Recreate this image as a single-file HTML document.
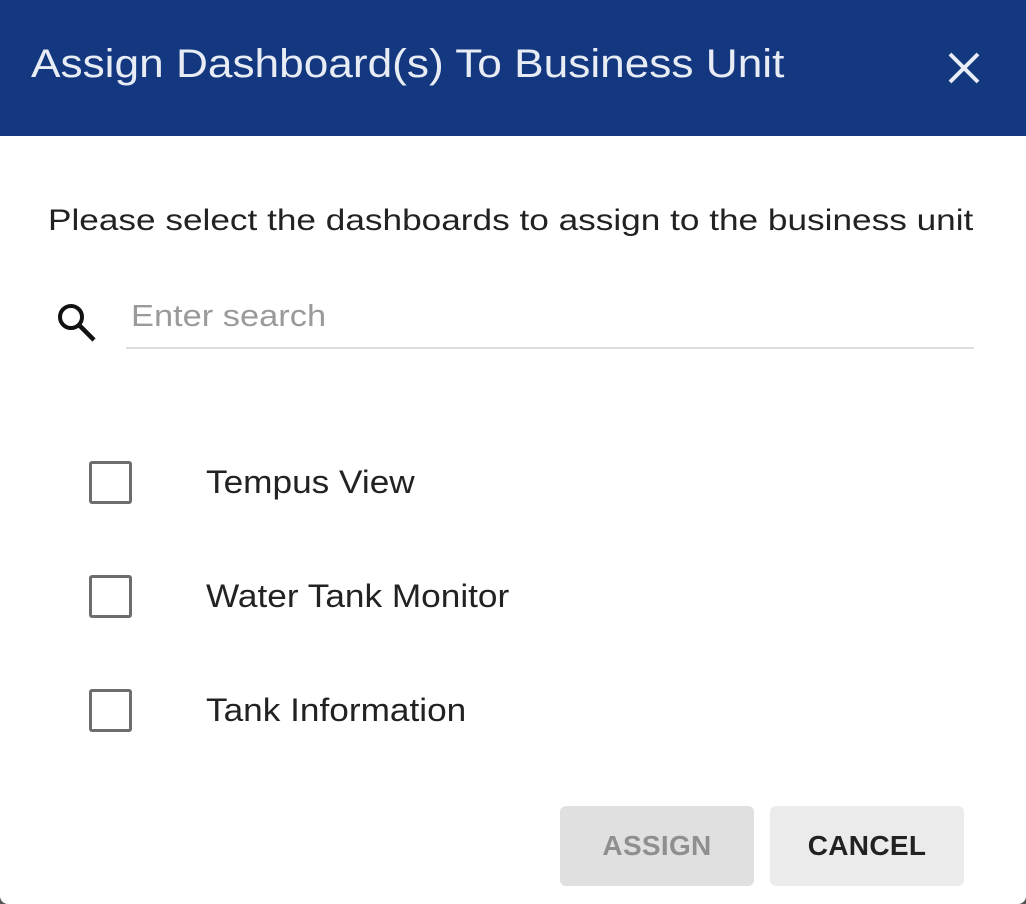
<!DOCTYPE html>
<html><head><style>
html,body{margin:0;padding:0;width:1026px;height:904px;overflow:hidden;background:#555;}
.d{position:absolute;left:0;top:0;width:1026px;height:904px;background:#fff;border-radius:0 0 8px 8px;font-family:"Liberation Sans",sans-serif;}
.h{position:absolute;left:0;top:0;width:1026px;height:136px;background:#14387f;}
.t{position:absolute;left:31px;top:42px;font-size:40px;color:#e8ecf5;white-space:nowrap;transform:scaleX(1.105);transform-origin:left;}
.p{position:absolute;left:48px;top:204px;font-size:30px;color:#222;white-space:nowrap;transform:scaleX(1.173);transform-origin:left;}
.ph{position:absolute;left:131px;top:298px;font-size:31px;color:#9a9a9a;transform:scaleX(1.11);transform-origin:left;}
.u{position:absolute;left:126px;top:347px;width:848px;height:2px;background:#ddd;}
.cb{position:absolute;left:89px;width:37px;height:37px;border:3px solid #6d6d6d;border-radius:3px;}
.l{position:absolute;left:206px;font-size:32px;color:#222;white-space:nowrap;transform:scaleX(1.1);transform-origin:left;}
.b{position:absolute;top:806px;width:194px;height:80px;border-radius:6px;font-size:28px;font-weight:bold;display:flex;align-items:center;justify-content:center;letter-spacing:0.3px;}
</style></head><body><div class="d">
<div class="h"><div class="t">Assign Dashboard(s) To Business Unit</div>
<svg style="position:absolute;left:946px;top:50px" width="36" height="36" viewBox="0 0 36 36"><path d="M4 4L32 32M32 4L4 32" stroke="#e8ecf5" stroke-width="4"/></svg></div>
<div class="p">Please select the dashboards to assign to the business unit</div>
<svg style="position:absolute;left:55px;top:300px" width="44" height="44" viewBox="0 0 44 44"><circle cx="16" cy="17" r="11" fill="none" stroke="#111" stroke-width="4"/><path d="M24 25L39 40" stroke="#111" stroke-width="4.5"/></svg>
<div class="ph">Enter search</div>
<div class="u"></div>
<div class="cb" style="top:461px"></div><div class="l" style="top:464px">Tempus View</div>
<div class="cb" style="top:575px"></div><div class="l" style="top:578px">Water Tank Monitor</div>
<div class="cb" style="top:689px"></div><div class="l" style="top:692px">Tank Information</div>
<div class="b" style="left:560px;background:#e0e0e0;color:#8f8f8f">ASSIGN</div>
<div class="b" style="left:770px;background:#ebebeb;color:#222">CANCEL</div>
</div></body></html>
